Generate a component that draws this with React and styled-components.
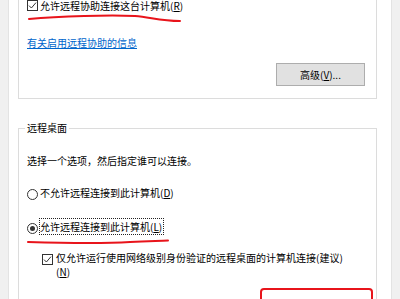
import styled, { createGlobalStyle } from "styled-components";

const GlobalStyle = createGlobalStyle`
  html, body {
    margin: 0;
    padding: 0;
    background: #f0f0f0;
    overflow: hidden;
  }
  body {
    font-family: "Noto Sans CJK SC", "Microsoft YaHei", sans-serif;
    font-size: 10px;
    color: #000;
  }
`;

const Screen = styled.div`
  position: relative;
  width: 400px;
  height: 299px;
  background: #f0f0f0;
  overflow: hidden;
`;

const Panel = styled.div`
  margin-left: 8px;
  width: 384px;
  height: 100%;
  box-sizing: border-box;
  background: #fff;
  border-left: 1px solid #e3e3e3;
  border-right: 1px solid #e3e3e3;
  padding: 0 14px 0 9px;
  display: flex;
  flex-direction: column;
`;

const GroupBox = styled.section`
  position: relative;
  flex-shrink: 0;
  display: flex;
  flex-direction: column;
  align-items: flex-start;
  border: 1px solid #dcdcdc;
  margin-top: ${(p) => p.$offset}px;
  padding: ${(p) => p.$pad};
`;

const Legend = styled.span`
  position: absolute;
  top: -8px;
  left: 6px;
  padding: 0 2px;
  background: #fff;
  line-height: 14px;
`;

const Row = styled.div`
  display: flex;
  align-items: ${(p) => (p.$top ? "flex-start" : "center")};
  margin-top: ${(p) => p.$gap || 0}px;
  margin-left: ${(p) => p.$indent || 0}px;
`;

const CheckBox = styled.span`
  flex-shrink: 0;
  width: 11px;
  height: 11px;
  box-sizing: border-box;
  border: 1px solid #333;
  background: #fff;
  display: flex;
  align-items: center;
  justify-content: center;
  margin-top: ${(p) => p.$drop || 0}px;
`;

const RadioDot = styled.span`
  flex-shrink: 0;
  width: 11px;
  height: 11px;
  box-sizing: border-box;
  border: 1px solid #333;
  border-radius: 50%;
  background: #fff;
  display: flex;
  align-items: center;
  justify-content: center;
  margin-top: 3px;

  &::after {
    content: "";
    display: ${(p) => (p.$checked ? "block" : "none")};
    width: 5px;
    height: 5px;
    border-radius: 50%;
    background: #333;
  }
`;

const Caption = styled.span`
  line-height: ${(p) => p.$lh || 13}px;
  padding: 1px 1px 1px 0;
  margin-left: ${(p) => p.$gap || 1}px;
  border: 1px ${(p) => (p.$focused ? "dotted #222" : "solid transparent")};
  white-space: nowrap;
`;

const Text = styled.div`
  line-height: 14px;
  margin-top: ${(p) => p.$gap || 0}px;
`;

const Link = styled.a`
  display: block;
  line-height: 14px;
  margin-top: 22px;
  color: #0066cc;
  text-decoration: underline;
  cursor: pointer;
`;

const Button = styled.button`
  align-self: flex-end;
  margin-top: 13px;
  width: 89px;
  height: 23px;
  box-sizing: border-box;
  background: #e1e1e1;
  border: 1px solid #adadad;
  font: inherit;
  font-size: 10px;
  color: #000;
  padding: 0;
  line-height: 14px;
`;

const Ink = styled.svg`
  position: absolute;
  inset: 0;
  pointer-events: none;
`;

function Tick() {
  return (
    <svg width="9" height="9" viewBox="0 0 9 9">
      <polyline points="1,4.6 3.4,7 8,1.6" fill="none" stroke="#333" strokeWidth="1" />
    </svg>
  );
}

export default function App() {
  return (
    <>
      <GlobalStyle />
      <Screen>
        <Panel>
          <GroupBox $offset={-12} $pad="8px 11px 12px 8px">
            <Row>
              <CheckBox>
                <Tick />
              </CheckBox>
              <Caption>
                允许远程协助连接这台计算机(<u>R</u>)
              </Caption>
            </Row>
            <Link>有关启用远程协助的信息</Link>
            <Button>
              高级(<u>V</u>)...
            </Button>
          </GroupBox>

          <GroupBox $offset={29} $pad="25px 11px 40px 8px">
            <Legend>远程桌面</Legend>
            <Text>选择一个选项，然后指定谁可以连接。</Text>
            <Row $gap={16}>
              <RadioDot />
              <Caption>
                不允许远程连接到此计算机(<u>D</u>)
              </Caption>
            </Row>
            <Row $gap={17}>
              <RadioDot $checked />
              <Caption $focused>
                允许远程连接到此计算机(<u>L</u>)
              </Caption>
            </Row>
            <Row $gap={14} $indent={15} $top>
              <CheckBox $drop={5}>
                <Tick />
              </CheckBox>
              <Caption $gap={2} $lh={14}>
                仅允许运行使用网络级别身份验证的远程桌面的计算机连接(建议)
                <br />(<u>N</u>)
              </Caption>
            </Row>
          </GroupBox>
        </Panel>

        <Ink width="400" height="299" viewBox="0 0 400 299">
          <path
            d="M29 19 C60 16 110 15 135 16 C150 17 160 21 180 21"
            fill="none"
            stroke="#e8141b"
            strokeWidth="2"
            strokeLinecap="round"
          />
          <path
            d="M28 242 C60 243 100 244 130 242 C150 241 160 241 168 240.5"
            fill="none"
            stroke="#e8141b"
            strokeWidth="2"
            strokeLinecap="round"
          />
          <rect x="261" y="289" width="111" height="30" rx="3" fill="none" stroke="#e8141b" strokeWidth="2" />
        </Ink>
      </Screen>
    </>
  );
}
